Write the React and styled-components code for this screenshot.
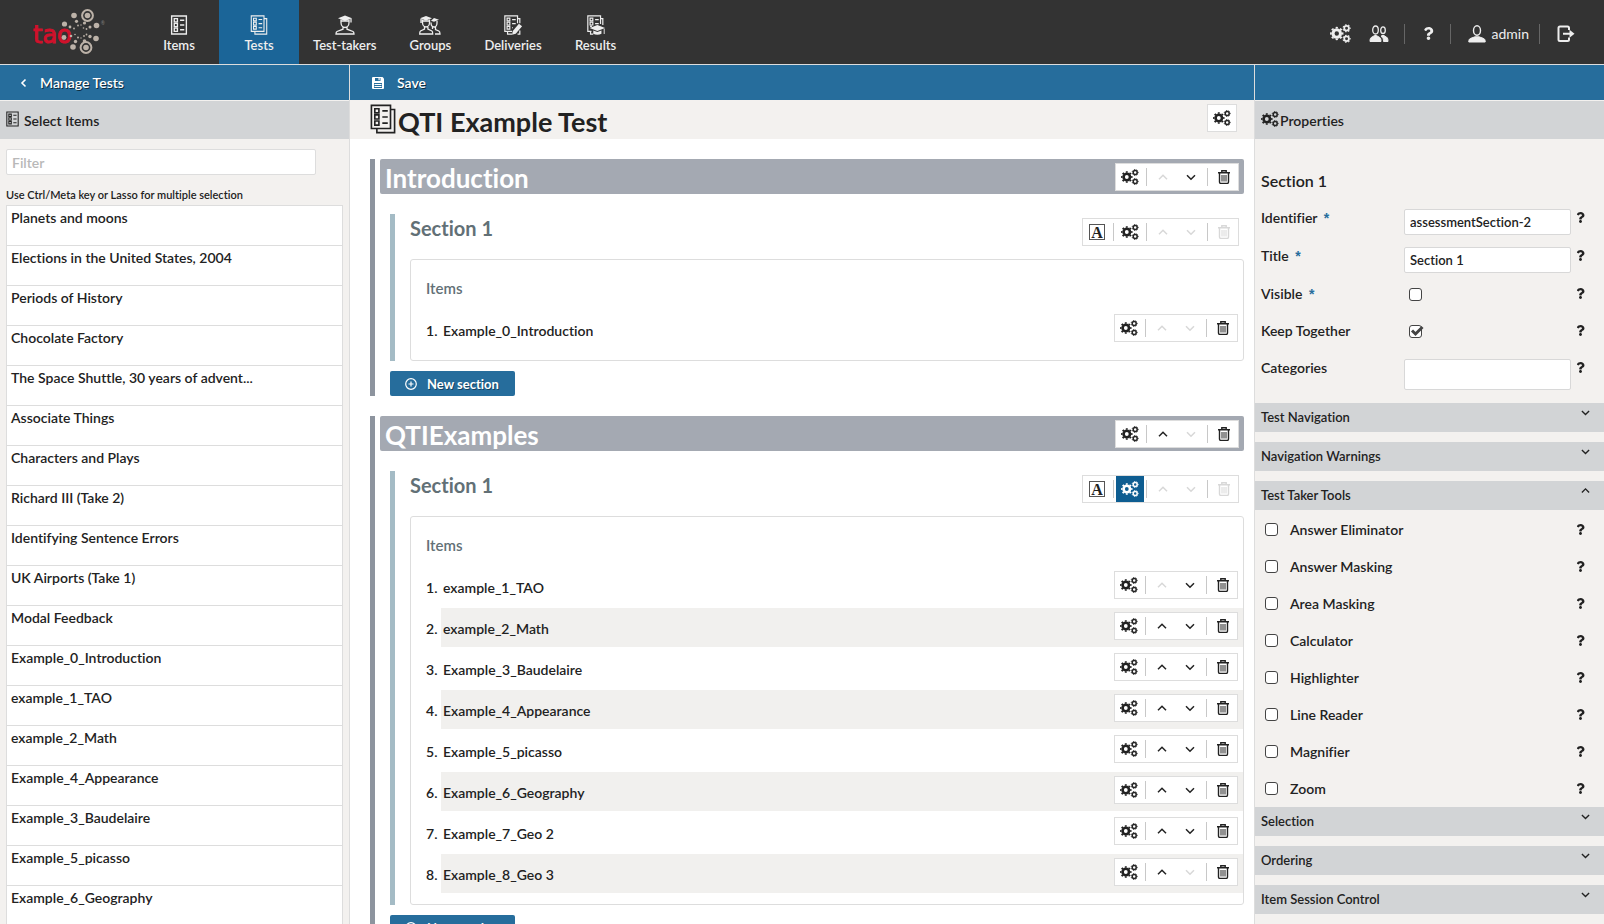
import React from 'react';
import styled, { createGlobalStyle } from 'styled-components';
import { FaQuestion } from 'react-icons/fa';


const GlobalStyle = createGlobalStyle`
  *, *::before, *::after {
    box-sizing: border-box;
  }
  body {
    margin: 0;
    background: #ffffff;
    color: #222222;
    font-family: Lato, "Liberation Sans", sans-serif;
    font-size: 14px;
    font-weight: 600;
    line-height: 20px;
    font-variant-ligatures: none;
  }
  button, input {
    font: inherit;
    color: inherit;
    font-variant-ligatures: none;
  }
  button {
    border: 0;
    padding: 0;
    background: none;
    cursor: pointer;
  }
  h1, h2, h3, h4, ul, ol {
    margin: 0;
    padding: 0;
    font-weight: inherit;
  }
  svg {
    display: block;
    flex-shrink: 0;
  }
`

const Page = styled.div`
  display: flex;
  flex-direction: column;
  height: 100vh;
  overflow: hidden;
`

/* ---- top bar ---- */

const TopBar = styled.header`
  display: flex;
  flex-shrink: 0;
  height: 65px;
  background: #333333;
  border-bottom: 1px solid #dddddd;
  color: #eeeeee;
`

const LogoLink = styled.a`
  width: 139px;
  padding: 0 0 0 30px;
`

const MainNav = styled.nav`
  display: flex;
  flex-grow: 1;
`

const NavLink = styled.a`
  display: flex;
  flex-direction: column;
  align-items: center;
  min-width: 80px;
  padding: 15px 14px 0;
  background: ${(props) => (props.$active ? '#1b6598' : 'transparent')};
  color: inherit;
  font-size: 13px;
  text-decoration: none;
`

const Settings = styled.div`
  display: flex;
  align-items: center;
  padding: 3px 20px 0 0;
`

const SettingsLink = styled.a`
  display: flex;
  align-items: center;
  gap: 6px;
  padding: 0 9px;
  color: inherit;
  font-size: 14px;
  font-weight: 400;
  text-decoration: none;
`

const SettingsGroup = styled.div`
  display: flex;
  align-items: center;
  height: 20px;
  padding: 0 ${(props) => (props.$tight ? '1px' : '6px')} 0 8px;
  border-right: 1px solid #666666;
  &:last-child {
    padding-right: 0;
    border-right: 0;
  }
`

/* ---- columns ---- */

const Columns = styled.main`
  display: flex;
  flex-grow: 1;
  min-height: 0;
`

const SideColumn = styled.section`
  display: flex;
  flex-direction: column;
  flex: 0 0 350px;
  background: #f3f1ef;
  border: 0 solid #dddddd;
  border-width: ${(props) => (props.$right ? '0 0 0 1px' : '0 1px 0 0')};
`

const EditorColumn = styled.section`
  display: flex;
  flex-direction: column;
  flex: 1 1 0;
  min-width: 0;
`

const ActionBar = styled.div`
  display: flex;
  flex-shrink: 0;
  height: 35px;
  padding: 0 ${(props) => (props.$wide ? '22px' : '20px')};
  background: #266d9c;
`

const ActionButton = styled.button`
  display: flex;
  align-items: center;
  gap: 13px;
  color: #ffffff;
  text-shadow: 1px 1px 0 rgba(0, 0, 0, 0.6);
`

const PanelTitle = styled.h2`
  display: flex;
  align-items: center;
  gap: ${(props) => props.$gap};
  flex-shrink: 0;
  height: 39px;
  padding: 2px 6px 0;
  border-top: 1px solid #f3f1ef;
  background: #d2d4d6;
  line-height: 20px;
  font-size: 14px;
  svg {
    margin-bottom: 5px;
  }
`

/* ---- item list ---- */

const FilterInput = styled.input`
  display: block;
  width: calc(100% - 39px);
  height: 26px;
  flex-shrink: 0;
  margin: 10px 0 0 6px;
  padding: 0 5px;
  border: 1px solid #dddddd;
  border-radius: 2px;
  background: #ffffff;
  &::placeholder {
    color: #b8b8b8;
    opacity: 1;
  }
`

const Hint = styled.p`
  margin: 10px 0 0 6px;
  font-size: 11px;
`

const ItemList = styled.ul`
  margin: 0 6px;
  border: 1px solid #dddddd;
  background: #ffffff;
  list-style: none;
`

const ListItem = styled.li`
  height: 40px;
  padding: 2px 4px;
  border-bottom: 1px solid #dddddd;
  overflow: hidden;
  text-overflow: ellipsis;
  white-space: nowrap;
`

/* ---- test editor ---- */

const TestHeader = styled.div`
  display: flex;
  align-items: flex-start;
  justify-content: space-between;
  flex-shrink: 0;
  height: 39px;
  padding: 4px 17px 0 20px;
  background: #f3f1ef;
`

const TestTitle = styled.h1`
  display: flex;
  align-items: flex-start;
  gap: 2px;
  font-size: 27px;
  font-weight: 700;
  line-height: 36px;
`

const EditorContent = styled.div`
  flex: 1 1 0;
  min-height: 0;
  padding: 20px 10px 0 20px;
  overflow: hidden;
`

const TestPart = styled.div`
  padding-left: 5px;
  margin-bottom: 20px;
  border-left: 5px solid #8d949e;
`

const PartHeader = styled.div`
  display: flex;
  align-items: flex-start;
  justify-content: space-between;
  height: 35px;
  padding: 4px 5px 0;
  border-radius: 2px;
  background: #a4a9b2;
  h2 {
    color: #ffffff;
    font-size: 26px;
    font-weight: 700;
    line-height: 30px;
  }
`

const Section = styled.div`
  margin: 20px 0 10px 10px;
  padding-left: 15px;
  border-left: 5px solid #a4bbc5;
`

const SectionHeader = styled.div`
  display: flex;
  justify-content: space-between;
  align-items: flex-start;
  height: 45px;
  padding: 4px 5px 0 0;
  h3 {
    color: #627076;
    font-size: 20px;
    font-weight: 700;
  }
`

const ItemsBox = styled.div`
  padding: 19px 0 9px 15px;
  border: 1px solid #dddddd;
  border-radius: 3px;
  h4 {
    height: 31px;
    color: #627076;
    font-size: 15px;
    line-height: 18px;
  }
`

const ItemRow = styled.li`
  display: flex;
  height: 41px;
  padding-bottom: 2px;
`

const ItemNumber = styled.span`
  width: 15px;
  line-height: 42px;
`

const ItemBody = styled.div`
  display: flex;
  flex-grow: 1;
  justify-content: space-between;
  padding: 4px 5px 0 2px;
  background: ${(props) => (props.$shaded ? '#f1f0ee' : 'transparent')};
  line-height: 34px;
`

const Toolbar = styled.div`
  display: flex;
  align-items: center;
  height: 28px;
  border: 1px solid #dddddd;
  background: #ffffff;
`

const ToolButton = styled.button`
  display: flex;
  align-items: center;
  justify-content: center;
  width: 28px;
  height: 26px;
  background: ${(props) => (props.$active ? '#0e5d91' : 'transparent')};
  color: ${(props) => (props.$active ? '#ffffff' : '#222222')};
  &:disabled {
    color: #d8d8d8;
  }
`

const Divider = styled.span`
  width: 1px;
  height: 18px;
  margin: 0 2px;
  background: #c8c8c8;
`

const NewSection = styled.button`
  display: flex;
  align-items: center;
  gap: 10px;
  height: 25px;
  margin-left: 10px;
  padding: 0 16px 0 15px;
  border-radius: 2px;
  background: #266d9c;
  color: #ffffff;
  font-size: 13px;
  font-weight: 700;
  text-shadow: 1px 1px 0 rgba(0, 0, 0, 0.4);
`

/* ---- properties ---- */

const PropertiesHeading = styled.h3`
  padding: 32px 6px 18px;
  font-size: 16px;
`

const PropertyRow = styled.div`
  display: grid;
  grid-template-columns: 143px 167px 1fr;
  align-items: start;
  height: ${(props) => props.$height};
  padding-left: 6px;
  label {
    font-size: 14px;
    line-height: 18px;
  }
`

const Required = styled.abbr`
  margin-left: 3px;
  color: #266d9c;
  font-family: "Liberation Sans", sans-serif;
`

const TextInput = styled.input`
  width: 100%;
  height: ${(props) => (props.$tall ? '31px' : '26px')};
  padding: 0 5px;
  border: 1px solid #d8d8d8;
  border-radius: 2px;
  background: #ffffff;
  font-size: 13px;
`

const CheckWrap = styled.span`
  position: relative;
  display: block;
  width: 15px;
  height: 13px;
  margin: ${(props) => (props.$inField ? '3px 0 0 5px' : '0')};
  input {
    appearance: none;
    display: block;
    width: 13px;
    height: 13px;
    margin: 0;
    border: 1px solid #444444;
    border-radius: 3px;
    background: #ffffff;
  }
  svg {
    position: absolute;
    top: 0;
    left: 0;
    pointer-events: none;
  }
  input:not(:checked) + svg {
    display: none;
  }
`

const HelpButton = styled.button`
  justify-self: end;
  margin-right: 18px;
  padding: ${(props) => (props.$top ? '3px 0 0' : '0')};
`

const AccordionHeader = styled.button`
  display: flex;
  justify-content: space-between;
  flex-shrink: 0;
  width: 100%;
  height: 29px;
  margin-bottom: ${(props) => (props.$open ? '0' : '10px')};
  padding: 0 14px 0 6px;
  background: #d2d4d6;
  font-size: 13px;
  line-height: 28px;
  svg {
    margin-top: 5px;
  }
`

const ToolList = styled.div`
  padding-top: 1px;
`

const ToolRow = styled.div`
  display: flex;
  align-items: center;
  justify-content: space-between;
  height: 37px;
  padding-left: 10px;
  label {
    display: flex;
    align-items: center;
    gap: 10px;
  }
`

/* ---- icons ---- */

const Sheet = () => (
  <>
    <path d="M1 1h14v17H1z" />
    <path d="M3.5 3.5h3v3h-3zM3.5 8h3v3h-3zM3.5 12.5h3v3h-3zM9 5h4M9 9.5h4M9 14h4" />
  </>
)

const ItemIcon = ({ width = 18, height = 21, weight = 1.3 }) => (
  <svg width={width} height={height} viewBox="0 0 16 19" fill="none" stroke="currentColor" strokeWidth={weight}>
    <Sheet />
  </svg>
)

const TestIcon = ({ width = 20, height = 20 }) => (
  <svg width={width} height={height} viewBox="0 0 19 22" fill="none" stroke="currentColor" strokeWidth="1.2">
    <Sheet />
    <path d="M15 4h3v17H5v-3" />
  </svg>
)

const TestTakerIcon = () => (
  <svg width="20" height="20" viewBox="0 0 20 20" fill="none" stroke="currentColor" strokeWidth="1.3">
    <path d="M10 0.5l7 2.7-7 2.7-7-2.7z" fill="currentColor" stroke="none" />
    <path d="M6 4.5v3c0 3 2 5 4 5s4-2 4-5v-3M6 6h8M16 3.5v4M8 12v2.2l-6 2.3c-.8.4-1 1-1 2.5h18c0-1.5-.2-2.1-1-2.5l-6-2.3V12" />
  </svg>
)

const GroupIcon = () => (
  <svg width="22" height="20" viewBox="0 0 22 20" fill="none" stroke="currentColor" strokeWidth="1.3">
    <path d="M7 1l6 2.3-6 2.3-6-2.3zM15 3l5 1.8-5 2-3-1z" fill="currentColor" stroke="none" />
    <path d="M3.5 4.5v3c0 2.5 1.5 4.5 3.5 4.5s3.5-2 3.5-4.5v-3M3.5 6h7M5.5 12v2l-4 2c-.6.4-.8 1-.8 3h13c0-2-.2-2.6-.8-3l-4-2v-2M12 7.5c0 3 1.3 4.5 3 4.5s3-2 3-4V6M16.5 12v2.5l3.3 1.5c.9.5 1.2 1.5 1.2 3h-5M13.5 12v2M2 4v4" />
  </svg>
)

const DeliveryIcon = () => (
  <svg width="20" height="20" viewBox="0 0 20 22" fill="none" stroke="currentColor" strokeWidth="1.3">
    <path d="M15 9V1H1v17h8M3.5 3.5h3v3h-3zM3.5 8h3v3h-3zM3.5 12.5h3v3h-3zM9 5h4M9 9.5h4M9 14h1M15 4h2.5v5M4 18v3h5M15 21h2.5v-4" />
    <path d="M16.5 9.5l3.5 3-7 8-4 1.3.8-4.3z" fill="currentColor" stroke="none" />
  </svg>
)

const ResultIcon = () => (
  <svg width="20" height="20" viewBox="0 0 20 22" fill="none" stroke="currentColor" strokeWidth="1.3">
    <path d="M15 10V1H1v17h4M3.5 3.5h3v3h-3zM3.5 8h3v3h-3zM3.5 12.5h2M9 5h4M9 9.5h4M15 4h2.5v7M4 18v3h3" />
    <path d="M11.5 11l8.5 3.3-8.5 3.3L3 14.3z" fill="currentColor" stroke="none" />
    <path d="M7 17l4.5 1.8L16 17v3.5c-2.5 1.5-6.5 1.5-9 0zM18.5 15h1v6h-1z" fill="currentColor" stroke="none" />
  </svg>
)

// ring with a dashed circle round it for the teeth
const Gear = ({ x, y, r, width, tooth, teeth }) => (
  <>
    <circle cx={x} cy={y} r={r} strokeWidth={width} />
    <circle cx={x} cy={y} r={r + width / 2 + tooth / 3} strokeWidth={tooth} pathLength={teeth * 2} strokeDasharray="1 1" strokeDashoffset="0.5" />
  </>
)

const GearsIcon = ({ width = 18, height = 16 }) => (
  <svg width={width} height={height} viewBox="0 0 18 16" fill="none" stroke="currentColor">
    <Gear x={5.8} y={8} r={3.2} width={2.6} tooth={1.5} teeth={8} />
    <Gear x={14.2} y={3.5} r={2} width={1.5} tooth={0.9} teeth={7} />
    <Gear x={14.2} y={12.5} r={2} width={1.5} tooth={0.9} teeth={7} />
  </svg>
)

const UsersIcon = () => (
  <svg width="20" height="18" viewBox="0 0 20 18" fill="none" stroke="currentColor" strokeWidth="1.3">
    <ellipse cx="6.5" cy="5" rx="2.8" ry="4" />
    <ellipse cx="14" cy="5.2" rx="2.3" ry="3.3" />
    <path d="M1 16.5c0-3 .5-4 3-5l1.5-1h2l1.5 1c2.5 1 3 2 3 5z" fill="currentColor" strokeWidth="1" />
    <path d="M13 10.5h2l1 .8c2.5 1 3 2 3 5.2h-4.5c0-2.5-.5-4-2.5-5.2z" fill="currentColor" strokeWidth="1" />
  </svg>
)

const UserIcon = () => (
  <svg width="18" height="18" viewBox="0 0 18 18" fill="none" stroke="currentColor" strokeWidth="1.4">
    <ellipse cx="9" cy="5.5" rx="3.5" ry="4.7" />
    <path d="M.8 17c0-2 .3-3 2-3.7L7 11.8h4l4.2 1.5c1.7.7 2 1.7 2 3.7z" fill="currentColor" strokeWidth="1" />
  </svg>
)

const LogoutIcon = () => (
  <svg width="18" height="18" viewBox="0 0 18 18" fill="none" stroke="currentColor" strokeWidth="2">
    <path d="M12 5V3c0-1-.5-1.5-1.5-1.5H3C2 1.5 1.5 2 1.5 3v11.5c0 1 .5 1.5 1.5 1.5h7.5c1 0 1.5-.5 1.5-1.5v-2M6 8.8h7" />
    <path d="M12.5 4.8l5 4-5 4z" fill="currentColor" stroke="none" />
  </svg>
)

const SaveIcon = () => (
  <svg width="12" height="12" viewBox="0 0 12 12">
    <path d="M1 0h9.500L12 1.500V11a1 1 0 01-1 1H1a1 1 0 01-1-1V1a1 1 0 011-1z" fill="#ffffff" />
    <path d="M3 1h5.500v3H3zM2 6h8v5H2z" fill="#266d9c" />
    <path d="M6.500 1h1.200v2.300H6.500zM2.500 7h7v1h-7zM2.500 9h7v1h-7z" fill="#ffffff" />
  </svg>
)

const TrashIcon = () => (
  <svg width="12" height="14" viewBox="0 0 12 14" fill="none" stroke="currentColor">
    <path d="M0 2.7h12M3.8 2.5V.8h4.4v1.7M1.5 3v9c0 1 .4 1.4 1.2 1.4h6.6c.8 0 1.200-.4 1.200-1.400V3" strokeWidth="1.4" />
    <path d="M4 5v6.500M6 5v6.500M8 5v6.500" />
  </svg>
)

const Chevron = ({ up, size = 10 }) => (
  <svg width={size} height={size} viewBox="0 0 10 10" fill="none" stroke="currentColor" strokeWidth="1.5">
    <path d={up ? 'M1 7.200l4-4 4 4' : 'M1 3.300l4 4 4-4'} />
  </svg>
)

const BackIcon = () => (
  <svg width="7" height="10" viewBox="0 0 7 10" fill="none" stroke="currentColor" strokeWidth="1.6">
    <path d="M5.500 1.500L2 5l3.500 3.500" />
  </svg>
)

const RubricIcon = () => (
  <svg width="16" height="16" viewBox="0 0 16 16">
    <rect x="0.5" y="0.5" width="15" height="15" fill="none" stroke="#555555" />
    <text x="8" y="13.5" textAnchor="middle" fontFamily="Liberation Serif, serif" fontWeight="700" fontSize="16" fill="#222222">A</text>
  </svg>
)

const AddIcon = () => (
  <svg width="12" height="12" viewBox="0 0 12 12" fill="none" stroke="currentColor" strokeWidth="1.2">
    <circle cx="6" cy="6" r="5.3" />
    <path d="M6 3.500v5M3.500 6h5" />
  </svg>
)

// x, y and radius of the small dots in the logo
const logoDots = [
  [74, 15.5, 2.8], [64.5, 24, 2.6], [64, 37.5, 2.4], [73, 47, 2.8],
  [96.5, 25.5, 2.8], [96, 38.5, 2.8], [76.5, 21.3, 1.6], [70, 27, 1.4],
  [71, 36, 1.3], [75.5, 41.5, 1.7], [90, 27, 1.5], [90, 36.5, 1.7],
  [84.5, 23, 1.6], [84.5, 41, 1.8], [74, 28.5, 0.9], [78, 25.5, 0.9],
  [81, 25, 0.7], [83.5, 28, 0.8], [86.5, 29, 0.9], [75, 34.5, 0.8],
  [78, 37.5, 1], [81, 38, 0.7], [84, 36, 0.9], [86.5, 34.5, 0.9],
]

const Logo = () => (
  <svg width="80" height="64" viewBox="30 0 80 64" role="img" aria-label="tao">
    <text x="33" y="43" fontFamily="DejaVu Sans" fontSize="24" fontWeight="400" fill="#d0112b" stroke="#d0112b" strokeWidth="1">tao</text>
    <g fill="#bcb2a8">
      {logoDots.map(([x, y, r]) => <circle key={`${x}-${y}`} cx={x} cy={y} r={r} />)}
      <circle cx="87.5" cy="15.5" r="2.8" />
      <circle cx="86" cy="47.5" r="2.8" />
      <circle cx="87.5" cy="15.5" r="5.4" fill="none" stroke="#bcb2a8" strokeWidth="2" />
      <circle cx="86" cy="47.5" r="5.4" fill="none" stroke="#bcb2a8" strokeWidth="2" />
    </g>
    <text x="101" y="25" fontFamily="Liberation Sans" fontSize="5" fill="#777777">®</text>
  </svg>
)


const navItems = [
  { label: 'Items', icon: <ItemIcon height={20} /> },
  { label: 'Tests', icon: <TestIcon />, active: true },
  { label: 'Test-takers', icon: <TestTakerIcon /> },
  { label: 'Groups', icon: <GroupIcon /> },
  { label: 'Deliveries', icon: <DeliveryIcon /> },
  { label: 'Results', icon: <ResultIcon /> },
];

const availableItems = [
  'Planets and moons',
  'Elections in the United States, 2004',
  'Periods of History',
  'Chocolate Factory',
  'The Space Shuttle, 30 years of advent...',
  'Associate Things',
  'Characters and Plays',
  'Richard III (Take 2)',
  'Identifying Sentence Errors',
  'UK Airports (Take 1)',
  'Modal Feedback',
  'Example_0_Introduction',
  'example_1_TAO',
  'example_2_Math',
  'Example_4_Appearance',
  'Example_3_Baudelaire',
  'Example_5_picasso',
  'Example_6_Geography',
];

const testParts = [
  {
    title: 'Introduction',
    items: ['Example_0_Introduction'],
  },
  {
    title: 'QTIExamples',
    sectionActive: true,
    items: [
      'example_1_TAO',
      'example_2_Math',
      'Example_3_Baudelaire',
      'Example_4_Appearance',
      'Example_5_picasso',
      'Example_6_Geography',
      'Example_7_Geo 2',
      'Example_8_Geo 3',
    ],
  },
];

const tools = [
  'Answer Eliminator',
  'Answer Masking',
  'Area Masking',
  'Calculator',
  'Highlighter',
  'Line Reader',
  'Magnifier',
  'Zoom',
];


const Tools = ({ rubric, active, up, down, remove }) => (
  <Toolbar>
    {rubric && (
      <>
        <ToolButton type="button" aria-label="Rubric block"><RubricIcon /></ToolButton>
        <Divider />
      </>
    )}
    <ToolButton type="button" aria-label="Properties" $active={active}><GearsIcon /></ToolButton>
    <Divider />
    <ToolButton type="button" aria-label="Move up" disabled={!up}><Chevron up /></ToolButton>
    <ToolButton type="button" aria-label="Move down" disabled={!down}><Chevron /></ToolButton>
    <Divider />
    <ToolButton type="button" aria-label="Delete" disabled={!remove}><TrashIcon /></ToolButton>
  </Toolbar>
)

const Checkbox = ({ inField, ...rest }) => (
  <CheckWrap $inField={inField}>
    <input type="checkbox" {...rest} />
    <svg width="15" height="13" viewBox="0 0 15 13" fill="none" stroke="#444444" strokeWidth="3">
      <path d="M3 5.500l3.500 3.500L13.500 2" />
    </svg>
  </CheckWrap>
)

const Help = ({ top }) => (
  <HelpButton type="button" aria-label="Help" $top={top}><FaQuestion size={11} /></HelpButton>
)

const Accordion = ({ title, open }) => (
  <AccordionHeader type="button" aria-expanded={!!open} $open={open}>
    {title}
    <Chevron up={open} size={9} />
  </AccordionHeader>
)


class App extends React.Component {
  constructor(props) {
    super(props);
    this.state = {
      filter: '',
      identifier: 'assessmentSection-2',
      title: 'Section 1',
      categories: '',
      visible: false,
      keepTogether: true,
    };
    this.handleChange = this.handleChange.bind(this);
  }

  handleChange(e) {
    const { name, type, checked, value } = e.target;
    this.setState({ [name]: type === 'checkbox' ? checked : value });
  }

  render() {
    const { filter, identifier, title, categories, visible, keepTogether } = this.state;
    const shownItems = availableItems.filter((item) => item.toLowerCase().includes(filter.toLowerCase()));

    return (
      <Page>
        <GlobalStyle />
        <TopBar>
          <LogoLink href="#home"><Logo /></LogoLink>
          <MainNav>
            {navItems.map((item) => (
              <NavLink key={item.label} href={`#${item.label}`} $active={item.active}>
                {item.icon}
                {item.label}
              </NavLink>
            ))}
          </MainNav>
          <Settings>
            <SettingsGroup>
              <SettingsLink href="#settings" aria-label="Settings"><GearsIcon width={21} height={19} /></SettingsLink>
              <SettingsLink href="#users" aria-label="Users"><UsersIcon /></SettingsLink>
            </SettingsGroup>
            <SettingsGroup>
              <SettingsLink href="#help" aria-label="Help"><FaQuestion size={13} /></SettingsLink>
            </SettingsGroup>
            <SettingsGroup $tight>
              <SettingsLink href="#user"><UserIcon />admin</SettingsLink>
            </SettingsGroup>
            <SettingsGroup>
              <SettingsLink href="#logout" aria-label="Log out"><LogoutIcon /></SettingsLink>
            </SettingsGroup>
          </Settings>
        </TopBar>

        <Columns>
          <SideColumn>
            <ActionBar>
              <ActionButton type="button"><BackIcon />Manage Tests</ActionButton>
            </ActionBar>
            <PanelTitle $gap="5px"><ItemIcon width={13} height={16} />Select Items</PanelTitle>
            <FilterInput
              name="filter"
              placeholder="Filter"
              aria-label="Filter"
              value={filter}
              onChange={this.handleChange}
            />
            <Hint>Use Ctrl/Meta key or Lasso for multiple selection</Hint>
            <ItemList>
              {shownItems.map((item) => <ListItem key={item}>{item}</ListItem>)}
            </ItemList>
          </SideColumn>

          <EditorColumn>
            <ActionBar $wide>
              <ActionButton type="button"><SaveIcon />Save</ActionButton>
            </ActionBar>
            <TestHeader>
              <TestTitle><TestIcon width={26} height={30} />QTI Example Test</TestTitle>
              <Toolbar>
                <ToolButton type="button" aria-label="Test properties"><GearsIcon /></ToolButton>
              </Toolbar>
            </TestHeader>
            <EditorContent>
              {testParts.map((part, index) => (
                <TestPart key={part.title}>
                  <PartHeader>
                    <h2>{part.title}</h2>
                    <Tools up={index > 0} down={index < testParts.length - 1} remove />
                  </PartHeader>
                  <Section>
                    <SectionHeader>
                      <h3>Section 1</h3>
                      <Tools rubric active={part.sectionActive} />
                    </SectionHeader>
                    <ItemsBox>
                      <h4>Items</h4>
                      <ol>
                        {part.items.map((item, i) => (
                          <ItemRow key={item}>
                            <ItemNumber>{i + 1}.</ItemNumber>
                            <ItemBody $shaded={i % 2 === 1}>
                              {item}
                              <Tools up={i > 0} down={i < part.items.length - 1} remove />
                            </ItemBody>
                          </ItemRow>
                        ))}
                      </ol>
                    </ItemsBox>
                  </Section>
                  <NewSection type="button"><AddIcon />New section</NewSection>
                </TestPart>
              ))}
            </EditorContent>
          </EditorColumn>

          <SideColumn $right>
            <ActionBar />
            <PanelTitle $gap="1px"><GearsIcon />Properties</PanelTitle>
            <PropertiesHeading>Section 1</PropertiesHeading>
            <PropertyRow $height="38px">
              <label htmlFor="identifier">Identifier <Required>*</Required></label>
              <TextInput id="identifier" name="identifier" value={identifier} onChange={this.handleChange} />
              <Help top />
            </PropertyRow>
            <PropertyRow $height="38px">
              <label htmlFor="title">Title <Required>*</Required></label>
              <TextInput id="title" name="title" value={title} onChange={this.handleChange} />
              <Help top />
            </PropertyRow>
            <PropertyRow $height="37px">
              <label htmlFor="visible">Visible <Required>*</Required></label>
              <Checkbox inField id="visible" name="visible" checked={visible} onChange={this.handleChange} />
              <Help top />
            </PropertyRow>
            <PropertyRow $height="37px">
              <label htmlFor="keepTogether">Keep Together</label>
              <Checkbox inField id="keepTogether" name="keepTogether" checked={keepTogether} onChange={this.handleChange} />
              <Help top />
            </PropertyRow>
            <PropertyRow $height="44px">
              <label htmlFor="categories">Categories</label>
              <TextInput $tall id="categories" name="categories" value={categories} onChange={this.handleChange} />
              <Help top />
            </PropertyRow>
            <Accordion title="Test Navigation" />
            <Accordion title="Navigation Warnings" />
            <Accordion title="Test Taker Tools" open />
            <ToolList>
              {tools.map((tool) => (
                <ToolRow key={tool}>
                  <label><Checkbox />{tool}</label>
                  <Help />
                </ToolRow>
              ))}
            </ToolList>
            <Accordion title="Selection" />
            <Accordion title="Ordering" />
            <Accordion title="Item Session Control" />
          </SideColumn>
        </Columns>
      </Page>
    );
  }
}

export default App;
